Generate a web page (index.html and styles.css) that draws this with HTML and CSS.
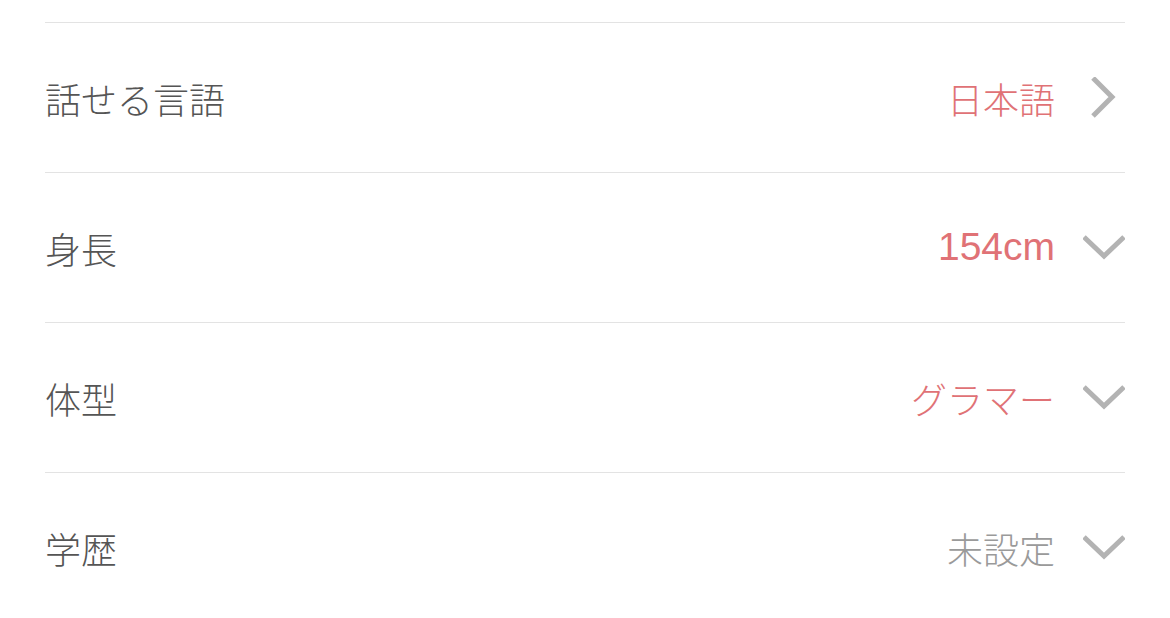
FILE: index.html
```html
<!DOCTYPE html>
<html lang="ja">
<head>
    <meta charset="UTF-8">
    <meta name="viewport" content="width=device-width, initial-scale=1.0">
    <title>プロフィール</title>
    <link rel="stylesheet" href="styles.css">
</head>
<body>
<div class="profile-list">
    <div class="profile-row">
        <span class="row-label">話せる言語</span>
        <span class="row-value">日本語</span>
        <span class="row-icon">
            <svg width="42" height="42" viewBox="0 0 42 42"><polyline points="10,1 29,20 10,39" fill="none" stroke="#b3b3b3" stroke-width="5"/></svg>
        </span>
    </div>
    <div class="profile-row">
        <span class="row-label">身長</span>
        <span class="row-value number">154cm</span>
        <span class="row-icon">
            <svg width="42" height="42" viewBox="0 0 42 42"><polyline points="1,10 21,29 41,10" fill="none" stroke="#b3b3b3" stroke-width="5"/></svg>
        </span>
    </div>
    <div class="profile-row">
        <span class="row-label">体型</span>
        <span class="row-value">グラマー</span>
        <span class="row-icon">
            <svg width="42" height="42" viewBox="0 0 42 42"><polyline points="1,10 21,29 41,10" fill="none" stroke="#b3b3b3" stroke-width="5"/></svg>
        </span>
    </div>
    <div class="profile-row">
        <span class="row-label">学歴</span>
        <span class="row-value unset">未設定</span>
        <span class="row-icon">
            <svg width="42" height="42" viewBox="0 0 42 42"><polyline points="1,10 21,29 41,10" fill="none" stroke="#b3b3b3" stroke-width="5"/></svg>
        </span>
    </div>
</div>
</body>
</html>
```

FILE: styles.css
```css
body {
    margin: 0;
    background-color: #FFFFFF;
    font-family: "Liberation Sans", "Noto Sans CJK JP", sans-serif;
    overflow: hidden;
}
.profile-list {
    padding: 22px 45px 0 45px;
}
.profile-row {
    display: flex;
    align-items: center;
    height: 150px;
    box-sizing: border-box;
    border-top: 1px solid #e3e3e3;
}
.row-label {
    flex: 1;
    font-size: 36px;
    font-weight: 300;
    color: #555555;
}
.row-value {
    font-size: 36px;
    font-weight: 300;
    color: #e07276;
    margin-right: 28px;
}
.row-value.number {
    font-size: 39px;
    margin-top: -2px;
}
.row-value.unset {
    color: #9a9a9a;
}
.row-icon {
    display: flex;
    width: 42px;
    height: 42px;
}
```
